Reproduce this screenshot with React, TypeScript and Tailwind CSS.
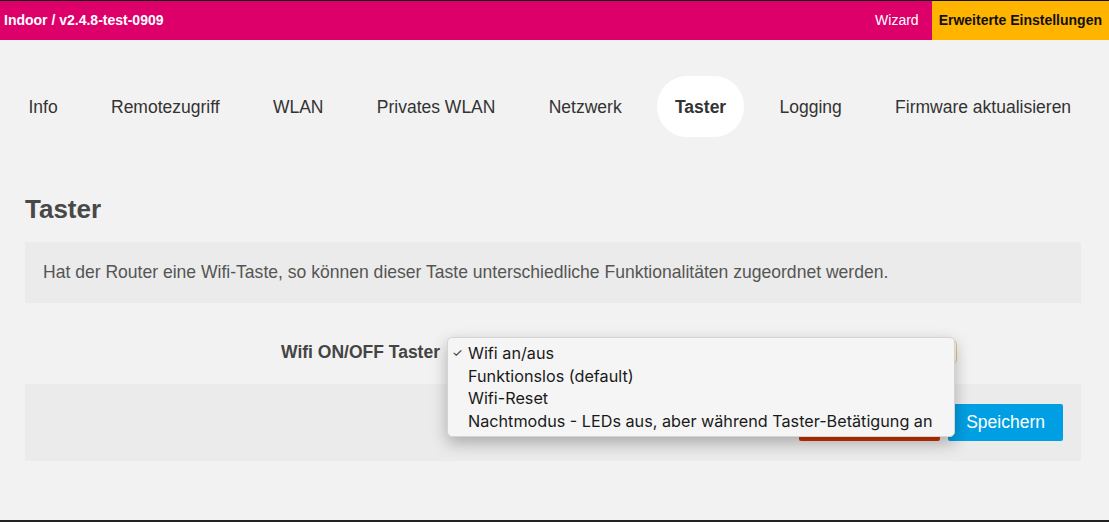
import React from "react";

const navItems = [
  "Info",
  "Remotezugriff",
  "WLAN",
  "Privates WLAN",
  "Netzwerk",
  "Taster",
  "Logging",
  "Firmware aktualisieren",
];

const options = [
  "Wifi an/aus",
  "Funktionslos (default)",
  "Wifi-Reset",
  "Nachtmodus - LEDs aus, aber während Taster-Betätigung an",
];

export default function App() {
  return (
    <div
      className="flex h-[522px] w-[1109px] flex-col overflow-hidden bg-[#f2f2f2]"
      style={{ fontFamily: '"Liberation Sans", Arial, sans-serif' }}
    >
      <div className="h-px bg-[#111]" />
      <header className="flex h-[39px] items-center bg-[#dd006b] text-[14px]">
        <div className="pl-[4px] font-bold text-white">Indoor / v2.4.8-test-0909</div>
        <div className="ml-auto pr-[13px] text-white">Wizard</div>
        <div className="flex h-full items-center bg-[#ffb400] px-[7px] font-bold text-[#111]">
          Erweiterte Einstellungen
        </div>
      </header>

      <nav className="mt-[36px] flex h-[61px] items-center gap-[17.3px] pl-[10.5px] pt-[2px] text-[17.5px] text-[#333]">
        {navItems.map((item) =>
          item === "Taster" ? (
            <div
              key={item}
              className="-mt-[2px] flex h-[61px] items-center rounded-[30px] bg-white px-[18px] pt-[2px] font-bold"
            >
              {item}
            </div>
          ) : (
            <div key={item} className="px-[18px]">
              {item}
            </div>
          )
        )}
      </nav>

      <main className="pl-[25px] pr-[28px]">
        <h1 className="mt-[57px] h-[30px] text-[26px] font-bold leading-[30px] text-[#484848]">
          Taster
        </h1>
        <div className="mt-[18px] flex h-[61px] items-center bg-[#ebebeb] px-[18px] text-[17.56px] text-[#555]">
          Hat der Router eine Wifi-Taste, so können dieser Taste unterschiedliche Funktionalitäten zugeordnet werden.
        </div>

        <div className="mt-[37px] flex h-[24px] items-center">
          <label className="w-[415px] text-right text-[17.5px] font-bold text-[#444]">
            Wifi ON/OFF Taster
          </label>
          <div className="relative ml-[7px] h-[24px] w-[510px]">
            <div className="h-full w-full rounded-[4px] border border-[#e9c57a] bg-[#f7f7f7]" />
            <div
              className="absolute left-0 top-[-3px] z-10 w-[508px] rounded-[5px] border border-[#d4d4d4] bg-[#f5f5f5] py-[4px] text-[16.2px] text-[#1a1a1a] shadow-[0_6px_16px_rgba(0,0,0,0.28)]"
              style={{ fontFamily: 'Inter, "Noto Sans", sans-serif' }}
            >
              {options.map((o, i) => (
                <div key={o} className="flex h-[22.5px] items-center">
                  <span className="w-[20px] pl-[4px] text-[12px] leading-none text-[#333]">
                    {i === 0 ? "✓" : ""}
                  </span>
                  <span>{o}</span>
                </div>
              ))}
            </div>
          </div>
        </div>

        <div className="mt-[20px] flex h-[77px] items-center justify-end gap-[8px] bg-[#ebebeb] pr-[18px]">
          <button className="h-[37px] w-[141px] rounded-[2px] bg-[#cc3300] text-[17.5px] text-white">
            Zurücksetzen
          </button>
          <button className="h-[37px] rounded-[2px] bg-[#009fe3] px-[18px] text-[17.5px] text-white">
            Speichern
          </button>
        </div>
      </main>

      <div className="mt-auto h-[2px] bg-[#222]" />
    </div>
  );
}
